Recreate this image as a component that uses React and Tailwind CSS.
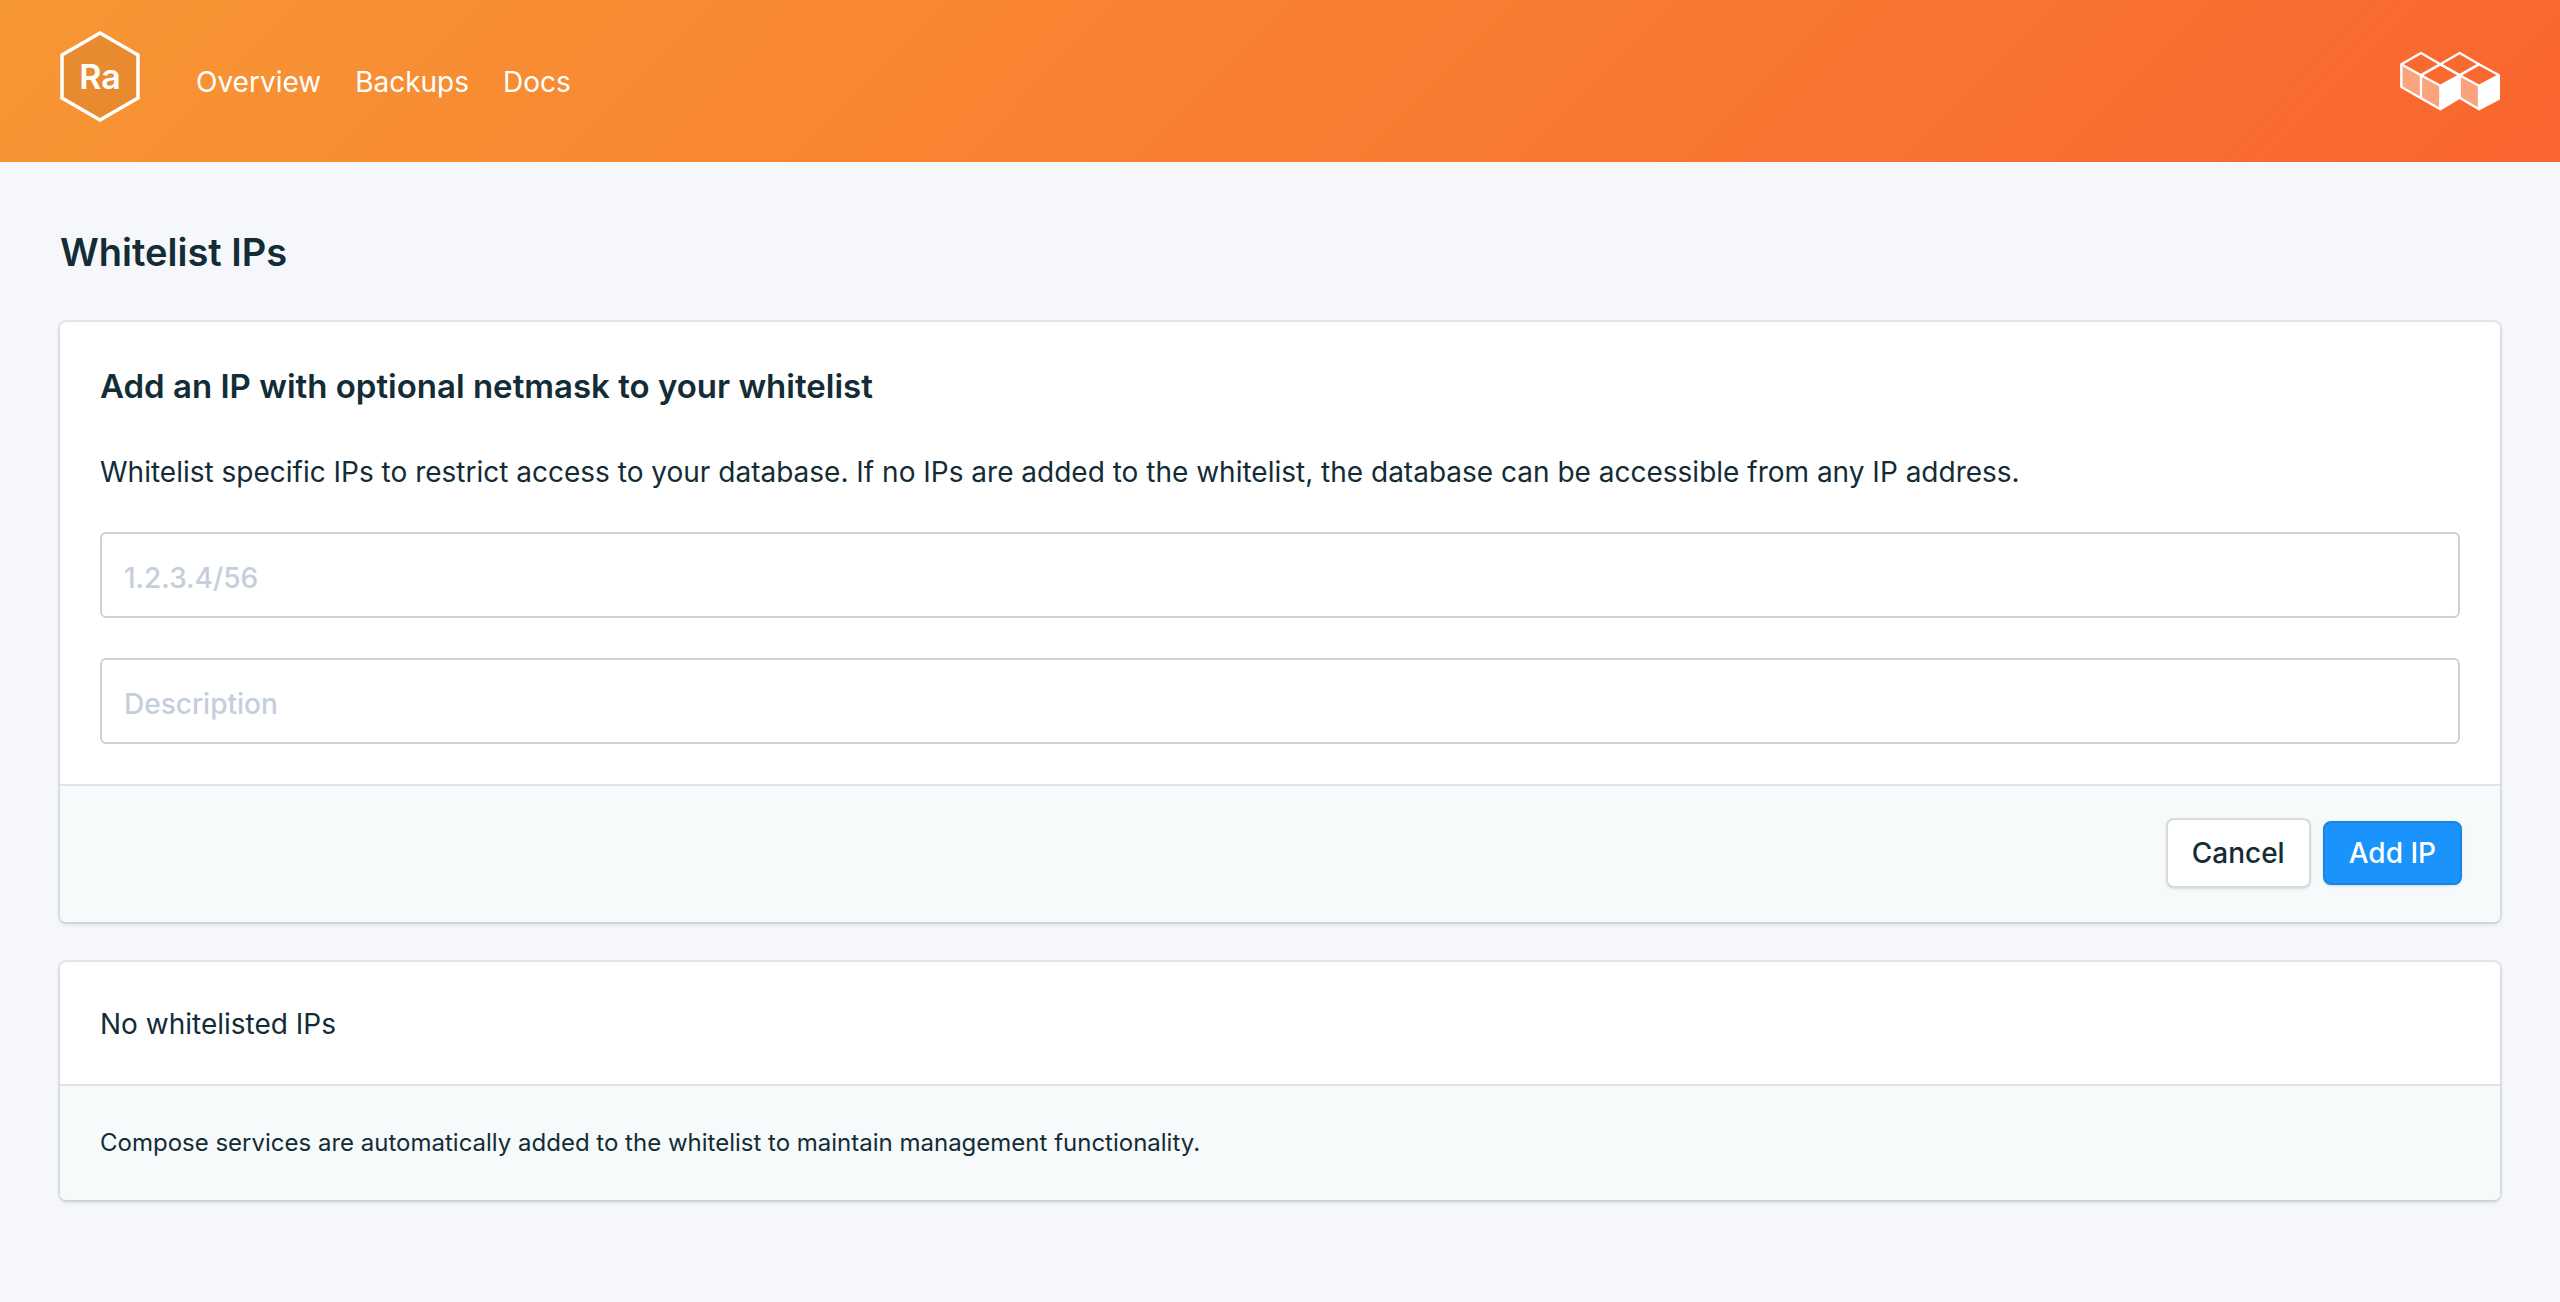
const links = ["Overview", "Backups", "Docs"];

const card =
  "overflow-hidden rounded-md bg-white shadow-[0_0_0_2px_rgba(21,41,53,0.07),0_2px_4px_rgba(21,41,53,0.16)]";
const footer = "border-t-2 border-[#dfe3e8] bg-[#f6fafb]";
const field =
  "h-[86px] w-full rounded-md border-2 border-[#cdd2d6] bg-white px-[22px] pt-1.5 text-[28px] font-medium text-[#132c36] placeholder:text-[#c4cedc]";

function RaLogo() {
  return (
    <svg width="80" height="92" viewBox="0 0 80 92" role="img" aria-label="Ra">
      <path
        d="M40 2 78 24V67L40 89 2 67V24Z"
        fill="#000"
        fillOpacity="0.06"
        stroke="#fff"
        strokeWidth="3.500"
      />
      <text
        x="40"
        y="58"
        textAnchor="middle"
        fill="#fff"
        className="text-[34px] font-semibold"
      >
        Ra
      </text>
    </svg>
  );
}

function CubesLogo() {
  return (
    <svg width="100" height="60" viewBox="60 63 300 180" role="img" aria-label="Compose">
      <g fill="#fff" fillOpacity="0.38">
        <path d="M62 103 123 136V203L62 171Z" />
        <path d="M123 136 181 167V238L123 203Z" />
        <path d="M239 136 297 167V238L239 203Z" />
      </g>
      <g fill="#fff">
        <path d="M181 167 239 136V203L181 238Z" />
        <path d="M297 167 357 136V206L297 238Z" />
      </g>
      <g fill="none" stroke="#fff" strokeWidth="7" strokeLinejoin="round">
        <path d="M64 103 123 69 181 103 123 136Z" />
        <path d="M181 103 239 69 297 103 239 136Z" />
        <path d="M123 136 181 103 239 136 181 167Z" />
        <path d="M239 136 297 103 357 136 297 167Z" />
        <path d="M64 103V171L181 238 239 203 297 238 357 206V136" />
        <path d="M123 136V203M181 167V238M239 136V203M297 167V238" />
      </g>
    </svg>
  );
}

export default function App() {
  return (
    <div className="min-h-screen bg-[#f6f7fb] font-['Inter',sans-serif] text-[28px] leading-[48px] text-[#132c36]">
      <header className="flex h-[162px] items-center justify-between bg-linear-135 from-[#f79634] to-[#f9652f] px-[60px] text-white">
        <div className="flex items-center gap-14">
          <a href="#home" className="mb-2">
            <RaLogo />
          </a>
          <nav className="flex gap-[34px] pt-0.5">
            {links.map((name) => (
              <a key={name} href={"#" + name.toLowerCase()}>
                {name}
              </a>
            ))}
          </nav>
        </div>
        <a href="#compose">
          <CubesLogo />
        </a>
      </header>

      <main className="flex flex-col px-[60px]">
        <h1 className="mt-[66px] mb-[46px] text-[38px] font-semibold">Whitelist IPs</h1>

        <form className={card} onSubmit={(e) => e.preventDefault()}>
          <div className="p-10">
            <h2 className="text-[33px] font-semibold">
              Add an IP with optional netmask to your whitelist
            </h2>
            <p className="mt-[38px] mb-9">
              Whitelist specific IPs to restrict access to your database. If no IPs are added to
              the whitelist, the database can be accessible from any IP address.
            </p>
            <div className="flex flex-col gap-10">
              <input type="text" aria-label="IP address" placeholder="1.2.3.4/56" className={field} />
              <input type="text" aria-label="Description" placeholder="Description" className={field} />
            </div>
          </div>
          <div className={footer + " flex items-center justify-end gap-3 pt-8 pr-[38px] pb-[34px] pl-10"}>
            <button
              type="button"
              className="h-[70px] rounded-lg border-2 border-[#d7dbdf] bg-white px-6 font-medium shadow-sm"
            >
              Cancel
            </button>
            <button
              type="submit"
              className="h-16 rounded-lg border-2 border-[#1785e2] bg-[#1a94fc] px-6 font-medium text-white shadow-sm"
            >
              Add IP
            </button>
          </div>
        </form>

        <section className={card + " mt-10"}>
          <p className="px-10 pt-[38px] pb-9">No whitelisted IPs</p>
          <p className={footer + " px-10 py-[33px] text-[24px]"}>
            Compose services are automatically added to the whitelist to maintain management
            functionality.
          </p>
        </section>
      </main>
    </div>
  );
}
